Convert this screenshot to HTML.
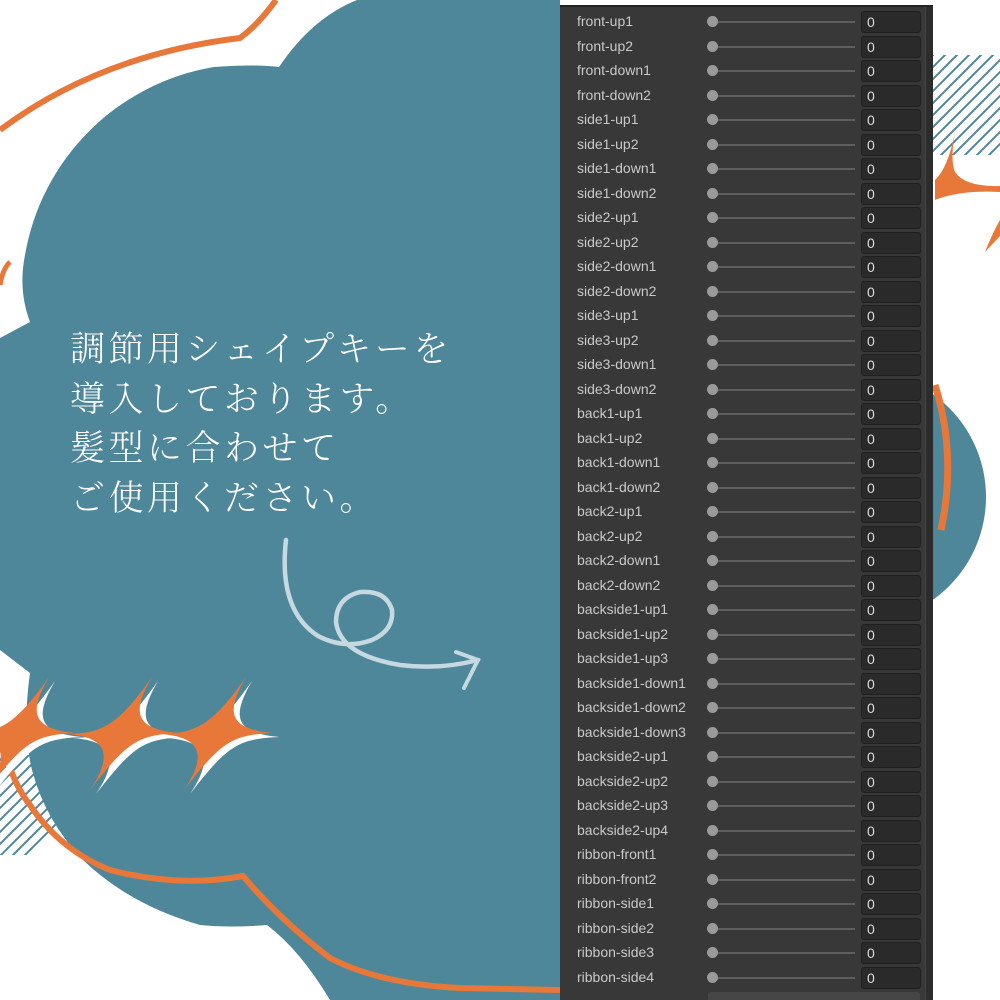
<!DOCTYPE html>
<html><head><meta charset="utf-8"><style>
*{margin:0;padding:0;box-sizing:border-box}
body{width:1000px;height:1000px;background:#fff;position:relative;overflow:hidden;font-family:"Liberation Sans",sans-serif}
svg.bg{position:absolute;left:0;top:0}
.txt{position:absolute;left:70px;top:325px;color:#fff;font-family:"Liberation Serif","Noto Serif CJK JP","Noto Serif CJK SC",serif;font-size:35px;line-height:49.5px;letter-spacing:3.5px;white-space:nowrap;font-weight:300}
.panel{position:absolute;left:560px;top:5px;width:373px;height:995px;background:#383838;border-top:2px solid #232323;overflow:hidden}
.sb{position:absolute;right:0;top:0;width:8px;height:100%;background:#2c2c2c;border-left:1px solid #444}
.row{position:absolute;left:0;height:24px;width:365px}
.row span{position:absolute;left:17px;top:3px;font-size:14px;color:#c9c9c9}
.row .tr{position:absolute;left:152px;top:11px;width:143px;height:2px;background:#5e5e5e}
.row .kn{position:absolute;left:147px;top:6px;width:11px;height:11px;border-radius:50%;background:#9a9a9a}
.row .bx{position:absolute;left:301px;top:1px;width:60px;height:22px;background:#2a2a2a;border:1px solid #1f1f1f;border-radius:3px;color:#ddd;font-size:14px;padding:2px 0 0 5px}
</style></head><body>
<svg class="bg" width="1000" height="1000" viewBox="0 0 1000 1000">
<defs>
<clipPath id="c1"><rect x="933" y="55" width="67" height="100"/></clipPath>
<clipPath id="c2"><rect x="0" y="755" width="80" height="100"/></clipPath>
</defs>
<g clip-path="url(#c1)" stroke="#4e8799" stroke-width="2">
<path d="M890 110 L990 10 M890 122 L1002 10 M890 134 L1014 10 M890 146 L1026 10 M890 158 L1038 10 M890 170 L1050 10 M890 182 L1062 10 M890 194 L1074 10 M890 206 L1086 10 M890 218 L1098 10 M890 230 L1110 10 M890 242 L1122 10 M890 254 L1134 10 M890 98 L978 10"/>
</g>
<g clip-path="url(#c2)" stroke="#4e8799" stroke-width="2">
<path d="M-40 800 L60 700 M-40 812 L72 700 M-40 824 L84 700 M-40 836 L96 700 M-40 848 L96 712 M-40 860 L96 724 M-40 872 L96 736 M-40 884 L96 748 M-40 896 L96 760 M-40 908 L96 772 M-40 920 L96 784"/>
</g>
<path d="M0 130 Q100 55 240 38 Q258 25 276 0" fill="none" stroke="#e8773a" stroke-width="6"/>
<path d="M0 285 Q3 268 10 262" fill="none" stroke="#e8773a" stroke-width="5"/>
<path d="M955,132 Q948,168 935,180 L935,200 Q960,190 1000,192 L1000,186 Q965,187 955,172 Q950,160 955,132Z" fill="#e8773a"/>
<path d="M985,252 Q993,232 1000,220 L1000,236Z" fill="#e8773a"/>
<circle cx="860" cy="497" r="126" fill="#4e8799"/>
<path d="M357,0 L560,0 L560,1000 L330,1000 Q300,950 267,925 Q230,928 200,925 Q130,905 83,860 Q45,820 32,770 Q22,730 30,673 L0,650 L0,338 L30,322 Q18,290 25,255 A230 230 0 0 1 214 67 Q255,64 279,67 Q312,18 357,0Z" fill="#4e8799"/>
<path d="M0 733 Q10 780 30 805 Q60 850 110 870 Q180 888 243 876 Q280 920 330 958 Q380 984 460 988 L560 990" fill="none" stroke="#e8773a" stroke-width="6"/>
<path d="M935 385 Q957 455 941 530" fill="none" stroke="#e8773a" stroke-width="7"/>
<g transform="translate(20,733)">
<path transform="translate(6,4)" d="M-56,1 C-20,0 -5,-8 29,-56 C8,-20 12,-4 56,0 C15,2 5,8 -33,57 C-8,20 -18,4 -56,1Z" fill="#fff"/>
<path d="M-56,1 C-20,0 -5,-8 29,-56 C8,-20 12,-4 56,0 C15,2 5,8 -33,57 C-8,20 -18,4 -56,1Z" fill="#e8773a"/>
</g>
<g transform="translate(123,733)">
<path transform="translate(6,4)" d="M-56,1 C-20,0 -5,-8 29,-56 C8,-20 12,-4 56,0 C15,2 5,8 -33,57 C-8,20 -18,4 -56,1Z" fill="#fff"/>
<path d="M-56,1 C-20,0 -5,-8 29,-56 C8,-20 12,-4 56,0 C15,2 5,8 -33,57 C-8,20 -18,4 -56,1Z" fill="#e8773a"/>
</g>
<g transform="translate(217,733)">
<path transform="translate(6,4)" d="M-56,1 C-20,0 -5,-8 29,-56 C8,-20 12,-4 56,0 C15,2 5,8 -33,57 C-8,20 -18,4 -56,1Z" fill="#fff"/>
<path d="M-56,1 C-20,0 -5,-8 29,-56 C8,-20 12,-4 56,0 C15,2 5,8 -33,57 C-8,20 -18,4 -56,1Z" fill="#e8773a"/>
</g>
<path d="M286,540 Q278,610 318,636 Q345,650 372,640 Q394,630 392,610 Q386,590 360,592 Q336,598 336,622 Q340,655 400,665 Q440,670 478,660" fill="none" stroke="#c7d9e0" stroke-width="4.5" stroke-linecap="round"/>
<path d="M456,652 L478,660 L464,688" fill="none" stroke="#c7d9e0" stroke-width="4" stroke-linecap="round"/>
</svg>
<div class="txt">調節用シェイプキーを<br>導入しております。<br>髪型に合わせて<br>ご使用ください。</div>
<div class="panel"><div class="sb"></div>
<div class="row" style="top:3px"><span>front-up1</span><i class="tr"></i><i class="kn"></i><div class="bx">0</div></div>
<div class="row" style="top:28px"><span>front-up2</span><i class="tr"></i><i class="kn"></i><div class="bx">0</div></div>
<div class="row" style="top:52px"><span>front-down1</span><i class="tr"></i><i class="kn"></i><div class="bx">0</div></div>
<div class="row" style="top:77px"><span>front-down2</span><i class="tr"></i><i class="kn"></i><div class="bx">0</div></div>
<div class="row" style="top:101px"><span>side1-up1</span><i class="tr"></i><i class="kn"></i><div class="bx">0</div></div>
<div class="row" style="top:126px"><span>side1-up2</span><i class="tr"></i><i class="kn"></i><div class="bx">0</div></div>
<div class="row" style="top:150px"><span>side1-down1</span><i class="tr"></i><i class="kn"></i><div class="bx">0</div></div>
<div class="row" style="top:175px"><span>side1-down2</span><i class="tr"></i><i class="kn"></i><div class="bx">0</div></div>
<div class="row" style="top:199px"><span>side2-up1</span><i class="tr"></i><i class="kn"></i><div class="bx">0</div></div>
<div class="row" style="top:224px"><span>side2-up2</span><i class="tr"></i><i class="kn"></i><div class="bx">0</div></div>
<div class="row" style="top:248px"><span>side2-down1</span><i class="tr"></i><i class="kn"></i><div class="bx">0</div></div>
<div class="row" style="top:273px"><span>side2-down2</span><i class="tr"></i><i class="kn"></i><div class="bx">0</div></div>
<div class="row" style="top:297px"><span>side3-up1</span><i class="tr"></i><i class="kn"></i><div class="bx">0</div></div>
<div class="row" style="top:322px"><span>side3-up2</span><i class="tr"></i><i class="kn"></i><div class="bx">0</div></div>
<div class="row" style="top:346px"><span>side3-down1</span><i class="tr"></i><i class="kn"></i><div class="bx">0</div></div>
<div class="row" style="top:371px"><span>side3-down2</span><i class="tr"></i><i class="kn"></i><div class="bx">0</div></div>
<div class="row" style="top:395px"><span>back1-up1</span><i class="tr"></i><i class="kn"></i><div class="bx">0</div></div>
<div class="row" style="top:420px"><span>back1-up2</span><i class="tr"></i><i class="kn"></i><div class="bx">0</div></div>
<div class="row" style="top:444px"><span>back1-down1</span><i class="tr"></i><i class="kn"></i><div class="bx">0</div></div>
<div class="row" style="top:469px"><span>back1-down2</span><i class="tr"></i><i class="kn"></i><div class="bx">0</div></div>
<div class="row" style="top:493px"><span>back2-up1</span><i class="tr"></i><i class="kn"></i><div class="bx">0</div></div>
<div class="row" style="top:518px"><span>back2-up2</span><i class="tr"></i><i class="kn"></i><div class="bx">0</div></div>
<div class="row" style="top:542px"><span>back2-down1</span><i class="tr"></i><i class="kn"></i><div class="bx">0</div></div>
<div class="row" style="top:567px"><span>back2-down2</span><i class="tr"></i><i class="kn"></i><div class="bx">0</div></div>
<div class="row" style="top:591px"><span>backside1-up1</span><i class="tr"></i><i class="kn"></i><div class="bx">0</div></div>
<div class="row" style="top:616px"><span>backside1-up2</span><i class="tr"></i><i class="kn"></i><div class="bx">0</div></div>
<div class="row" style="top:640px"><span>backside1-up3</span><i class="tr"></i><i class="kn"></i><div class="bx">0</div></div>
<div class="row" style="top:665px"><span>backside1-down1</span><i class="tr"></i><i class="kn"></i><div class="bx">0</div></div>
<div class="row" style="top:689px"><span>backside1-down2</span><i class="tr"></i><i class="kn"></i><div class="bx">0</div></div>
<div class="row" style="top:714px"><span>backside1-down3</span><i class="tr"></i><i class="kn"></i><div class="bx">0</div></div>
<div class="row" style="top:738px"><span>backside2-up1</span><i class="tr"></i><i class="kn"></i><div class="bx">0</div></div>
<div class="row" style="top:763px"><span>backside2-up2</span><i class="tr"></i><i class="kn"></i><div class="bx">0</div></div>
<div class="row" style="top:787px"><span>backside2-up3</span><i class="tr"></i><i class="kn"></i><div class="bx">0</div></div>
<div class="row" style="top:812px"><span>backside2-up4</span><i class="tr"></i><i class="kn"></i><div class="bx">0</div></div>
<div class="row" style="top:836px"><span>ribbon-front1</span><i class="tr"></i><i class="kn"></i><div class="bx">0</div></div>
<div class="row" style="top:861px"><span>ribbon-front2</span><i class="tr"></i><i class="kn"></i><div class="bx">0</div></div>
<div class="row" style="top:885px"><span>ribbon-side1</span><i class="tr"></i><i class="kn"></i><div class="bx">0</div></div>
<div class="row" style="top:910px"><span>ribbon-side2</span><i class="tr"></i><i class="kn"></i><div class="bx">0</div></div>
<div class="row" style="top:934px"><span>ribbon-side3</span><i class="tr"></i><i class="kn"></i><div class="bx">0</div></div>
<div class="row" style="top:959px"><span>ribbon-side4</span><i class="tr"></i><i class="kn"></i><div class="bx">0</div></div>
<div style="position:absolute;left:148px;top:985px;width:212px;height:12px;background:#464646;border-radius:3px"></div>
</div>
</body></html>
